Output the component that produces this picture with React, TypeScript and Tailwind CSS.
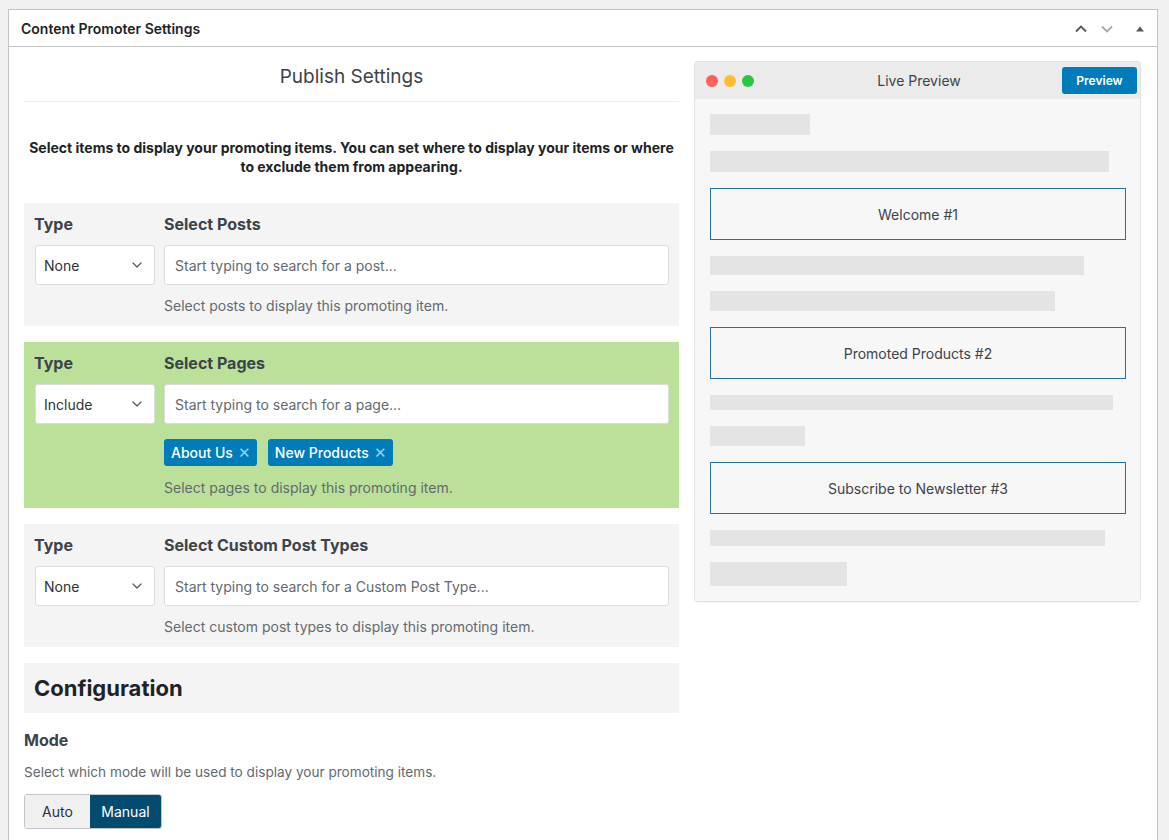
import { ChevronDown } from "lucide-react";

// 미리보기 스켈레톤 목록
const previewItems: ({ kind: "bar"; w: number; h: number } | { kind: "box"; label: string })[] = [
  { kind: "bar", w: 100, h: 21 },
  { kind: "bar", w: 399, h: 21 },
  { kind: "box", label: "Welcome #1" },
  { kind: "bar", w: 374, h: 19 },
  { kind: "bar", w: 345, h: 20 },
  { kind: "box", label: "Promoted Products #2" },
  { kind: "bar", w: 403, h: 15 },
  { kind: "bar", w: 95, h: 20 },
  { kind: "box", label: "Subscribe to Newsletter #3" },
  { kind: "bar", w: 395, h: 16 },
  { kind: "bar", w: 137, h: 24 },
];

function TypeRow({
  label,
  type,
  placeholder,
  help,
  tags,
  green,
}: {
  label: string;
  type: string;
  placeholder: string;
  help: string;
  tags?: string[];
  green?: boolean;
}) {
  return (
    <div className={`flex gap-[10px] pb-[10px] pl-[10px] pr-[10px] pt-[11px] ${green ? "bg-[#bbe09a]" : "bg-[#f4f4f4]"}`}>
      <div className="w-[120px] shrink-0">
        <div className="h-[20px] text-[16px] font-bold leading-[20px] text-[#3c434a]">Type</div>
        <div className="mt-[11px] ml-px flex h-[40px] w-[120px] items-center justify-between rounded-[3px] border border-[#dcdcde] bg-white pl-[8px] pr-[9px] text-[14px] text-[#2c3338]">
          <span>{type}</span>
          <ChevronDown size={16} strokeWidth={1.8} className="text-[#50575e]" />
        </div>
      </div>
      <div className="flex-1">
        <div className="h-[20px] text-[16px] font-bold leading-[20px] text-[#3c434a]">{label}</div>
        <div className="mt-[11px] flex h-[40px] items-center rounded-[3px] border border-[#dcdcde] bg-white px-[10px] text-[14px] text-[#646970]">
          {placeholder}
        </div>
        {tags && (
          <div className="mt-[15px] flex gap-[11px]">
            {tags.map((t) => (
              <span
                key={t}
                className="flex h-[27px] items-center gap-[5px] rounded-[3px] bg-[#007cba] pl-[7px] pr-[6px] text-[14px] font-medium text-white"
              >
                {t}
                <span className="text-[15px] leading-none text-[#9fd0ef]">✕</span>
              </span>
            ))}
          </div>
        )}
        <div className={`${tags ? "mt-[12px]" : "mt-[11px]"} h-[20px] text-[14px] leading-[20px] text-[#646970]`}>
          {help}
        </div>
      </div>
    </div>
  );
}

export default function App() {
  return (
    <div
      className="min-h-screen w-full bg-[#f0f0f1] pl-[8px] pt-[9px]"
      style={{ fontFamily: "Inter, 'Noto Sans', sans-serif" }}
    >
      <div className="w-[1150px] border border-[#c3c4c7] bg-white">
        {/* 헤더 */}
        <div className="flex h-[37px] items-center justify-between border-b border-[#c3c4c7] pl-[12px] pr-[12px] pt-px">
          <h2 className="text-[14px] font-semibold text-[#1d2327]">Content Promoter Settings</h2>
          <div className="flex items-center">
            <svg width="16" height="16" viewBox="0 0 16 16" className="mr-[10px]">
              <path d="M3 10.5 8 5.5l5 5" fill="none" stroke="#50575e" strokeWidth="1.8" />
            </svg>
            <svg width="16" height="16" viewBox="0 0 16 16" className="mr-[20px]">
              <path d="M3 5.5 8 10.5l5-5" fill="none" stroke="#a7aaad" strokeWidth="1.8" />
            </svg>
            <svg width="10" height="10" viewBox="0 0 10 10">
              <path d="M1 7.5h8L5 2.5z" fill="#50575e" />
            </svg>
          </div>
        </div>

        {/* 본문 */}
        <div className="flex gap-[15px] pb-[20px] pl-[15px] pr-[15px] pt-[14px]">
          {/* 왼쪽 */}
          <div className="w-[655px] shrink-0">
            <div className="border-b border-[#eeeeee] pb-[11px] pt-[3px] text-center text-[19px] leading-[26px] text-[#3c434a]">
              Publish Settings
            </div>
            <p className="mx-auto mt-[36px] text-center text-[14px] font-bold leading-[19px] text-[#1d2327]">
              Select items to display your promoting items. You can set where to display your items or where
              <br />
              to exclude them from appearing.
            </p>

            <div className="mt-[27px] flex flex-col gap-[16px]">
              <TypeRow
                label="Select Posts"
                type="None"
                placeholder="Start typing to search for a post..."
                help="Select posts to display this promoting item."
              />
              <TypeRow
                green
                label="Select Pages"
                type="Include"
                placeholder="Start typing to search for a page..."
                help="Select pages to display this promoting item."
                tags={["About Us", "New Products"]}
              />
              <TypeRow
                label="Select Custom Post Types"
                type="None"
                placeholder="Start typing to search for a Custom Post Type..."
                help="Select custom post types to display this promoting item."
              />
              <div className="flex h-[50px] items-center bg-[#f4f4f4] px-[10px] text-[22px] font-bold text-[#1d2327]">
                Configuration
              </div>
            </div>

            <div className="mt-[16px] text-[16px] font-bold leading-[22px] text-[#3c434a]">Mode</div>
            <div className="mt-[11px] text-[13.6px] leading-[20px] text-[#646970]">
              Select which mode will be used to display your promoting items.
            </div>
            <div className="mt-[12px] inline-flex h-[35px] overflow-hidden rounded-[3px] border border-[#c3c4c7] text-[14px]">
              <span className="flex w-[65px] items-center justify-center bg-[#f0f0f0] text-[#2c3338]">Auto</span>
              <span className="flex w-[71px] items-center justify-center bg-[#034b6f] text-white">Manual</span>
            </div>
          </div>

          {/* 오른쪽: 라이브 미리보기 */}
          <div className="w-[447px] shrink-0 self-start overflow-hidden rounded-[3px] border border-[#e2e2e2] shadow-[0_1px_1px_rgba(0,0,0,0.04)]">
            <div className="flex h-[37px] items-center bg-[#ebebeb] pl-[11px] pr-[3px]">
              <div className="flex gap-[6px]">
                <span className="h-[12px] w-[12px] rounded-full bg-[#fe5f57]" />
                <span className="h-[12px] w-[12px] rounded-full bg-[#febc2e]" />
                <span className="h-[12px] w-[12px] rounded-full bg-[#28c840]" />
              </div>
              <span className="flex-1 pl-[22px] text-center text-[14px] text-[#3c434a]">Live Preview</span>
              <span className="flex h-[27px] w-[75px] items-center justify-center rounded-[3px] bg-[#007cba] text-[12px] font-semibold text-white">
                Preview
              </span>
            </div>
            <div className="flex flex-col gap-[16px] bg-[#f7f7f7] px-[15px] pb-[15px] pt-[15px]">
              {previewItems.map((item, i) =>
                item.kind === "bar" ? (
                  <div key={i} className="bg-[#e4e4e4]" style={{ width: item.w, height: item.h }} />
                ) : (
                  <div
                    key={i}
                    className="flex h-[52px] w-[416px] items-center justify-center border border-[#2271b1] text-[14px] text-[#3c434a]"
                  >
                    {item.label}
                  </div>
                )
              )}
            </div>
          </div>
        </div>
      </div>
    </div>
  );
}
